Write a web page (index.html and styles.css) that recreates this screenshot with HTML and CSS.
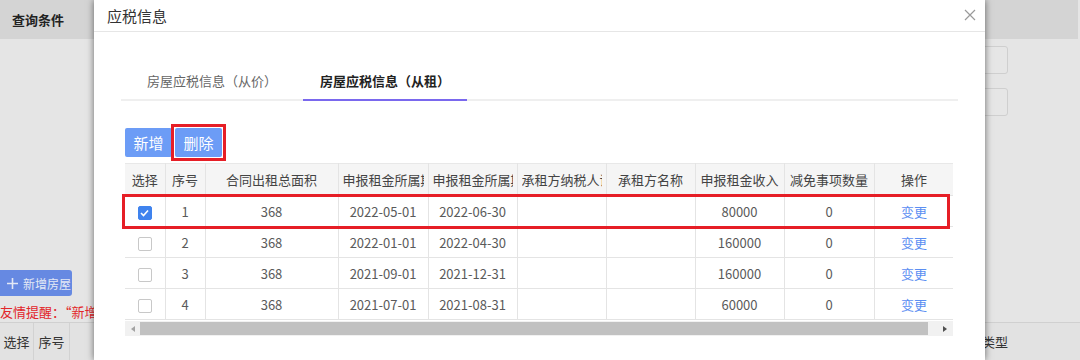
FILE: index.html
```html
<!DOCTYPE html>
<html lang="zh-CN">
<head>
<meta charset="UTF-8">
<meta name="viewport" content="width=device-width, initial-scale=1.0">
<title>应税信息</title>
<link rel="stylesheet" href="styles.css">
</head>
<body>

<div class="page">
    <div class="panel-head">查询条件</div>

    <div class="form">
        <div class="form-row"><span class="input"></span></div>
        <div class="form-row"><span class="input"></span></div>
    </div>

    <div class="actions">
        <button class="add-house">
            <svg width="11" height="11" viewBox="0 0 11 11"><path d="M5.5 0 V11 M0 5.5 H11" stroke="#e3e8f5" stroke-width="1.6" fill="none"/></svg>
            新增房屋
        </button>
        <p class="notice">友情提醒：“新增</p>
    </div>

    <div class="list-head">
        <span class="cell c-sel">选择</span>
        <span class="cell c-no">序号</span>
        <span class="cell c-fill"></span>
        <span class="cell c-type">类型</span>
    </div>
</div>

<!-- 弹窗：应税信息 -->
<div class="dialog">
    <div class="dialog-head">
        <span class="dialog-title">应税信息</span>
        <svg class="close" width="12" height="12" viewBox="0 0 12 12">
            <path d="M1 1 L11 11 M11 1 L1 11" stroke="#9a9a9a" stroke-width="1.2" fill="none"/>
        </svg>
    </div>

    <div class="dialog-body">
        <div class="tabs">
            <span class="tab">房屋应税信息（从价）</span>
            <span class="tab active">房屋应税信息（从租）</span>
        </div>

        <div class="toolbar">
            <button class="btn">新增</button>
            <span class="mark-box"><button class="btn">删除</button></span>
        </div>

        <div class="grid-wrap">
            <div class="grid-clip">
                <table class="grid">
                    <colgroup>
                        <col style="width:40px"><col style="width:40px"><col style="width:133px">
                        <col style="width:90px"><col style="width:89px"><col style="width:89px">
                        <col style="width:89px"><col style="width:89px"><col style="width:90px">
                        <col style="width:80px">
                    </colgroup>
                    <thead>
                        <tr>
                            <th>选择</th><th>序号</th><th>合同出租总面积</th>
                            <th><span class="clip">申报租金所属期起</span></th>
                            <th><span class="clip">申报租金所属期止</span></th>
                            <th><span class="clip">承租方纳税人识别号</span></th>
                            <th>承租方名称</th>
                            <th>申报租金收入</th><th>减免事项数量</th><th>操作</th>
                        </tr>
                    </thead>
                    <tbody>
                        <tr>
                            <td><span class="check on"><svg width="9" height="8" viewBox="0 0 9 8"><path d="M1 4 L3.5 6.5 L8 1.5" stroke="#fff" stroke-width="1.6" fill="none"/></svg></span></td>
                            <td>1</td><td>368</td><td>2022-05-01</td><td>2022-06-30</td><td></td><td></td><td>80000</td><td>0</td><td><a class="link">变更</a></td>
                        </tr>
                        <tr>
                            <td><span class="check"></span></td>
                            <td>2</td><td>368</td><td>2022-01-01</td><td>2022-04-30</td><td></td><td></td><td>160000</td><td>0</td><td><a class="link">变更</a></td>
                        </tr>
                        <tr>
                            <td><span class="check"></span></td>
                            <td>3</td><td>368</td><td>2021-09-01</td><td>2021-12-31</td><td></td><td></td><td>160000</td><td>0</td><td><a class="link">变更</a></td>
                        </tr>
                        <tr>
                            <td><span class="check"></span></td>
                            <td>4</td><td>368</td><td>2021-07-01</td><td>2021-08-31</td><td></td><td></td><td>60000</td><td>0</td><td><a class="link">变更</a></td>
                        </tr>
                    </tbody>
                </table>
            </div>

            <div class="scrollbar">
                <span class="arrow left"></span>
                <span class="thumb"></span>
                <span class="arrow right"></span>
            </div>

            <!-- 标注框 -->
            <div class="row-mark"></div>
        </div>
    </div>
</div>

</body>
</html>
```

FILE: styles.css
```css
body {
    margin: 0;
    font-family: "Noto Sans CJK SC", "Microsoft YaHei", sans-serif;
    color: #333;
    background-color: #e5e5e5;
    overflow: hidden;
}

/* 背景页面 */
.page {
    height: 360px;
    background-color: #e5e5e5;
    overflow: hidden;
}

.panel-head {
    height: 39px;
    line-height: 39px;
    margin-right: 2px;
    padding-left: 12px;
    background-color: #d4d4d4;
    font-size: 13px;
    font-weight: bold;
    color: #222;
}

.form {
    padding-top: 7px;
}

.form-row {
    display: flex;
    justify-content: flex-end;
    padding-right: 72px;
    margin-bottom: 14px;
}

.input {
    display: block;
    width: 220px;
    height: 26px;
    border: 1px solid #cfcfcf;
    border-radius: 3px;
    background-color: #e6e6e6;
}

.actions {
    padding-top: 140px;
    width: 94px;
    overflow: hidden;
}

.add-house {
    display: flex;
    align-items: center;
    gap: 5px;
    margin-left: -10px;
    width: 82px;
    height: 26px;
    border: none;
    border-radius: 3px;
    background-color: #6689e2;
    color: #e3e8f5;
    font-family: inherit;
    font-size: 12px;
    padding: 0 0 0 17px;
}

.add-house svg {
    display: block;
}

.notice {
    margin: 6px 0 0 0;
    height: 20px;
    line-height: 20px;
    font-size: 13px;
    color: #e2262a;
    white-space: nowrap;
}

.list-head {
    display: flex;
    height: 40px;
    border-top: 1px solid #d0d0d0;
    background-color: #e2e2e2;
    font-size: 13px;
    color: #333;
}

.cell {
    line-height: 38px;
    border-right: 1px solid #d2d2d2;
    white-space: nowrap;
}

.c-sel { width: 33px; text-align: center; }
.c-no { width: 35px; text-align: center; }
.c-fill { flex: 1; }
.c-type {
    width: 150px;
    border-right: none;
    text-align: right;
    padding-right: 72px;
}

/* 弹窗 */
.dialog {
    position: absolute;
    left: 94px;
    top: 0;
    width: 891px;
    height: 360px;
    background-color: #fff;
    box-shadow: 0 0 7px rgba(0, 0, 0, 0.55);
}

.dialog-head {
    display: flex;
    align-items: center;
    justify-content: space-between;
    height: 31px;
    padding: 0 9px 0 13px;
    border-bottom: 1px solid #e6e6e6;
}

.dialog-title {
    font-size: 15px;
    color: #333;
}

.close {
    display: block;
    margin-top: -2px;
}

.dialog-body {
    padding: 31px 27px 0 27px;
}

.tabs {
    display: flex;
    gap: 9px;
    padding-left: 9px;
    border-bottom: 2px solid #efefef;
}

.tab {
    height: 36px;
    line-height: 36px;
    padding: 0 17px;
    margin-bottom: -2px;
    border-bottom: 2px solid transparent;
    font-size: 13px;
    color: #666;
}

.tab.active {
    color: #222;
    font-weight: bold;
    border-bottom-color: #7a68ee;
}

.toolbar {
    display: flex;
    align-items: center;
    margin-top: 23px;
    padding-left: 4px;
}

.btn {
    display: block;
    width: 47px;
    height: 29px;
    border: none;
    border-radius: 2px;
    background-color: #6c9cf6;
    color: #fff;
    font-family: inherit;
    font-size: 15px;
    padding: 0;
}

.mark-box {
    display: block;
    margin-left: -1px;
    padding: 1px;
    border: 3px solid #e61e26;
}

.grid-wrap {
    position: relative;
    margin: 2px 0 0 4px;
    width: 828px;
}

.grid-clip {
    width: 828px;
    overflow: hidden;
}

.grid {
    border-collapse: collapse;
    table-layout: fixed;
    width: 828px;
    font-size: 13px;
    color: #555;
}

.grid th, .grid td {
    border: 1px solid #e4e4e4;
    padding: 0 4px;
    text-align: center;
    white-space: nowrap;
    overflow: hidden;
    font-weight: normal;
}

.grid th {
    height: 31px;
    background-color: #f5f5f5;
    color: #444;
}

.grid th .clip {
    display: block;
    overflow: hidden;
    text-align: left;
}

.grid td {
    height: 30px;
    color: #5a5a5a;
}

.grid tr > :first-child { border-left: none; }
.grid thead th { border-top-color: #e8e8e8; }

.check {
    display: inline-flex;
    align-items: center;
    justify-content: center;
    width: 12px;
    height: 12px;
    border: 1px solid #c8c8c8;
    border-radius: 2px;
    background-color: #fff;
    vertical-align: middle;
}

.check.on {
    background-color: #3f83ee;
    border-color: #3f83ee;
}

.check svg {
    display: block;
}

.link {
    color: #5b8ef2;
}

.scrollbar {
    display: flex;
    align-items: center;
    height: 15px;
    margin-top: 1px;
    background-color: #f1f1f1;
}

.arrow {
    width: 0;
    height: 0;
    border-top: 3px solid transparent;
    border-bottom: 3px solid transparent;
}

.arrow.left {
    margin: 0 5px 0 6px;
    border-right: 4px solid #a3a3a3;
}

.arrow.right {
    margin: 0 0 0 15px;
    border-left: 4px solid #505050;
}

.thumb {
    width: 788px;
    height: 13px;
    background-color: #c1c1c1;
}

.row-mark {
    position: absolute;
    left: -3px;
    top: 31px;
    width: 822px;
    height: 29px;
    border: 3px solid #e61e26;
}
```
